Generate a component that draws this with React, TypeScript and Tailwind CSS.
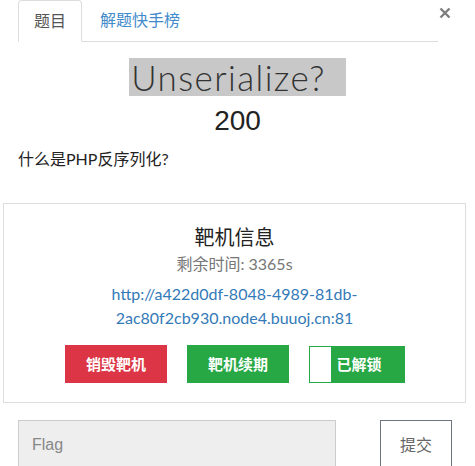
import React from "react";

export default function App() {
  const cjk = { fontFamily: 'Lato, "Noto Sans CJK SC", sans-serif' };
  return (
    <div className="relative w-[475px] h-[466px] overflow-hidden bg-white text-[#333]" style={cjk}>
      {/* tabs */}
      <div className="pl-[18px] pr-[37px]">
        <ul className="flex h-[42px] border-b border-[#ddd]">
          <li className="-mb-px mr-[2px] h-[42px] px-[15px] rounded-t-[4px] border border-[#ddd] border-b-white bg-white text-[16px] leading-[40px] text-[#555]">
            题目
          </li>
          <li className="-mb-px h-[42px] px-[16px] text-[16px] leading-[40px] text-[#428bca]">
            解题快手榜
          </li>
        </ul>
      </div>
      <button className="absolute left-[438px] top-[6px] w-[14px] h-[14px] flex items-center justify-center">
        <svg width="12" height="12" viewBox="0 0 12 12">
          <path d="M1.5 1.5 L10.5 10.5 M10.5 1.5 L1.5 10.5" stroke="#7d7d7d" strokeWidth="2.4" />
        </svg>
      </button>

      {/* title */}
      <div className="mt-[16px] text-center">
        <span
          className="inline-block h-[38px] bg-[#c8c8c8] pl-[2px] pr-[20px] text-[35px] leading-[38px] font-light tracking-[1.4px] text-[#333]"
          style={{ fontFamily: 'Lato, sans-serif' }}
        >
          Unserialize?
        </span>
      </div>
      <div className="mt-[4px] text-center text-[28px] leading-[40px] text-[#222]" style={{ fontFamily: '"Liberation Sans", Arial, sans-serif' }}>
        200
      </div>
      <div className="mt-[6px] pl-[18px] text-[16px] leading-[24px] text-[#222]">什么是PHP反序列化?</div>

      {/* card */}
      <div className="mt-[32px] ml-[3px] w-[463px] h-[200px] border border-[#ddd] pt-[19px] text-center">
        <div className="text-[20px] leading-[28px] text-[#222]">靶机信息</div>
        <div className="mt-px text-[16px] leading-[24px] text-[#777]">剩余时间: 3365s</div>
        <div className="mt-[6px] mx-auto w-[300px] text-[16px] leading-[24px] text-[#337ab7]">
          http://a422d0df-8048-4989-81db-2ac80f2cb930.node4.buuoj.cn:81
        </div>
        <div className="mt-[15px] flex justify-center items-start gap-[20px] pl-[1px]">
          <button className="w-[102px] h-[38px] bg-[#dc3545] text-white text-[15px] font-bold">销毁靶机</button>
          <button className="w-[102px] h-[38px] bg-[#28a745] text-white text-[15px] font-bold">靶机续期</button>
          <button className="relative mt-px w-[96px] h-[37px] border border-[#28a745] bg-[#28a745] text-white text-[15px] font-bold">
            <span className="absolute left-0 top-0 bottom-0 w-[21px] bg-white" />
            <span className="relative pl-[4px]">已解锁</span>
          </button>
        </div>
      </div>

      {/* flag input */}
      <div className="mt-[17px] flex pl-[18px]">
        <div
          className="w-[318px] h-[50px] border border-[#ccc] bg-[#eee] pl-[13px] text-[16px] leading-[48px] text-[#888]"
          style={{ fontFamily: '"Liberation Sans", Arial, sans-serif' }}
        >
          Flag
        </div>
        <button className="ml-[44px] w-[72px] h-[50px] border border-[#6c757d] bg-white text-[16px] text-[#666]">
          提交
        </button>
      </div>
    </div>
  );
}
